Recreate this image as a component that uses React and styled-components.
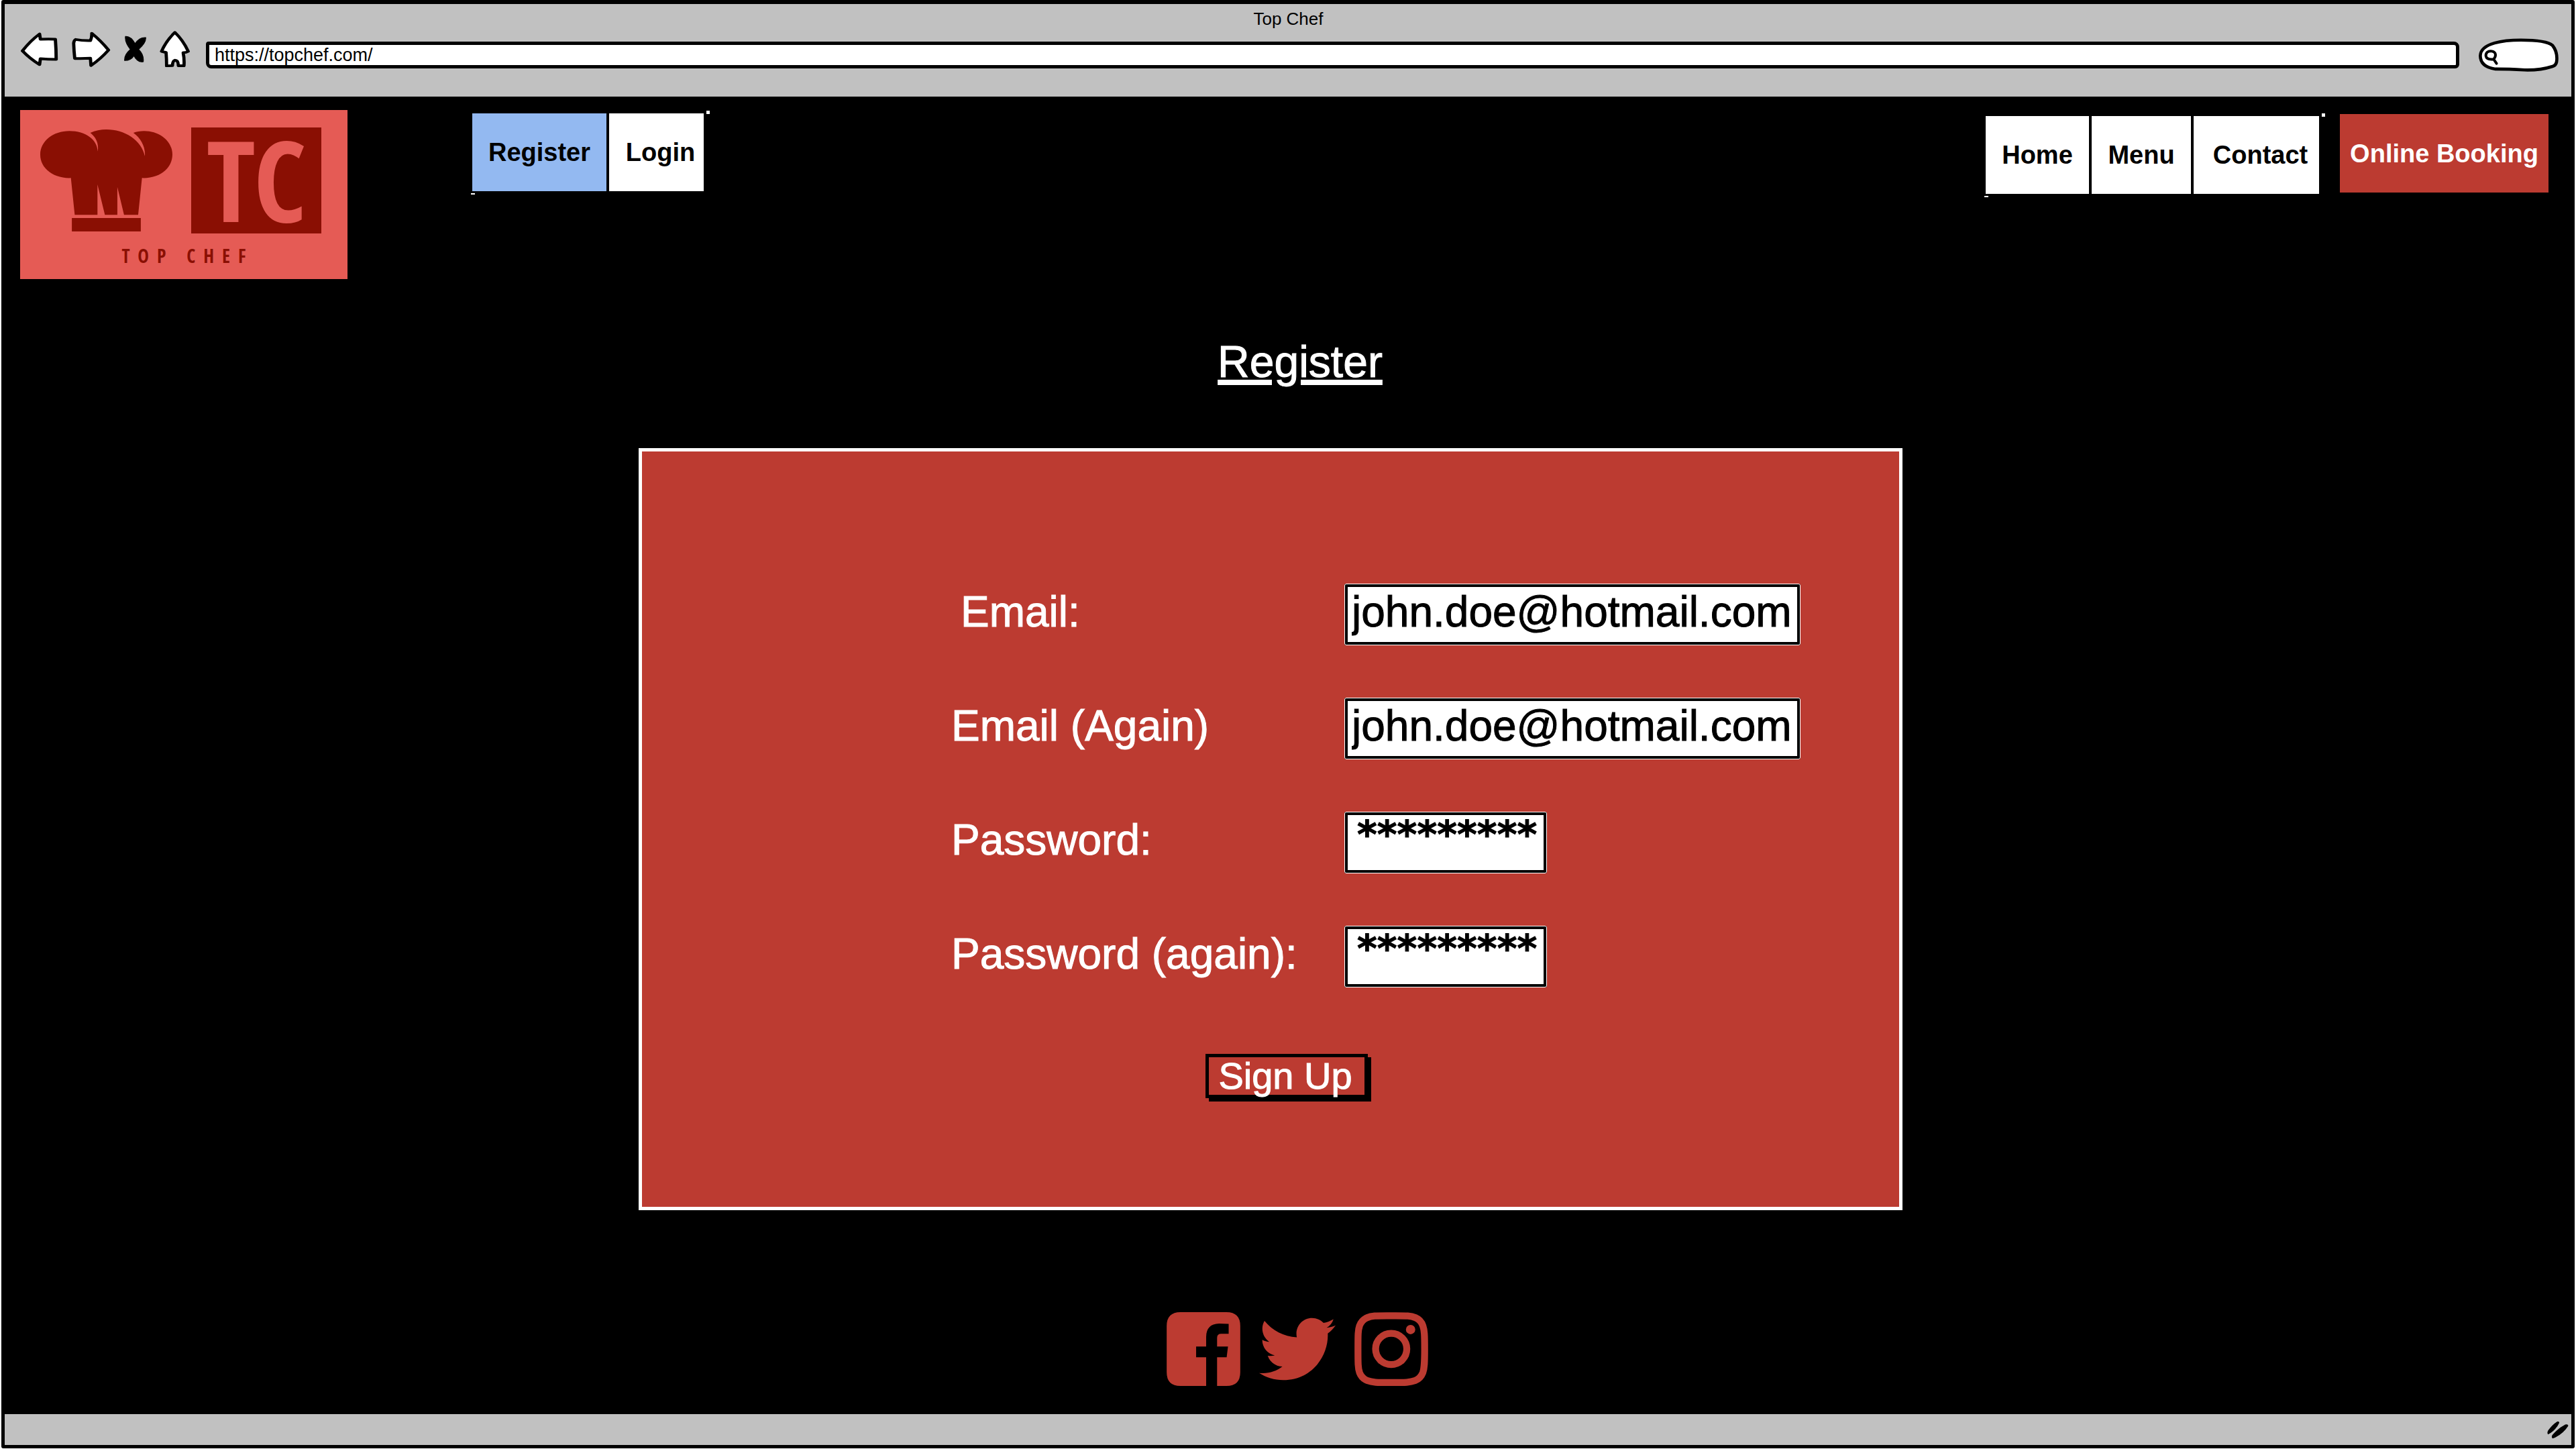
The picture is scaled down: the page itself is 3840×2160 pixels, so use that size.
import React from "react";
import styled, { createGlobalStyle } from "styled-components";
import { FaTwitter } from "react-icons/fa";

const RED = "#bc3b31";
const CHROME = "#c1c1c1";

const GlobalStyle = createGlobalStyle`
  * { box-sizing: border-box; }
  body { margin: 0; background: #fff; }
  body, input, button { font-family: "Liberation Sans", Arial, sans-serif; }
`;

const BrowserFrame = styled.div`
  margin: 0 2px 2px;
  border: 5px solid #000;
  border-top-width: 6px;
  border-radius: 3px;
  min-height: calc(100vh - 2px);
  background: #000;
  display: flex;
  flex-direction: column;
`;

const Toolbar = styled.div`
  height: 138px;
  background: ${CHROME};
  padding: 8px 23px 0 24px;
`;

const WindowTitle = styled.div`
  text-align: center;
  font-size: 26px;
  line-height: 28px;
  padding-bottom: 4px;
`;

const ToolbarRow = styled.div`
  display: flex;
  align-items: flex-end;
  height: 61px;
  margin-right: -4px;
`;

const ToolbarButtons = styled.div`
  display: flex;
  align-items: center;
  align-self: flex-start;
  height: 54px;
  gap: 20px;
  margin-right: 24px;
`;

const IconButton = styled.button`
  border: 0;
  padding: 0;
  background: none;
  display: flex;
`;

const AddressInput = styled.input`
  flex: 1;
  min-width: 0;
  height: 40px;
  margin: 0 29px 5px 0;
  padding: 0 8px;
  border: 5px solid #000;
  border-radius: 4px 8px 6px 8px;
  background: #fff;
  color: #000;
  font-size: 27px;
`;

const SearchBox = styled.div`
  position: relative;
  width: 119px;
  height: 50px;
`;

const SearchInput = styled.input`
  position: absolute;
  top: 10px;
  left: 32px;
  width: 72px;
  height: 30px;
  border: 0;
  padding: 0;
  background: none;
  font-size: 27px;
`;

const Header = styled.header`
  display: flex;
  align-items: flex-start;
  padding: 20px 34px 0 23px;
`;

const Logo = styled.a`
  width: 488px;
  height: 252px;
  margin-right: 186px;
  background: #e55b55;
  color: #8a0f03;
  text-decoration: none;
  font-family: "Open Sans Condensed", "Liberation Sans Narrow", "Open Sans", sans-serif;
  font-weight: 300;
`;

const LogoMarks = styled.div`
  display: flex;
  align-items: flex-start;
  gap: 28px;
  padding: 26px 0 0 30px;
  svg { margin-top: 3px; }
`;

const Monogram = styled.div`
  width: 194px;
  height: 158px;
  background: #8a0f03;
  color: #e55b55;
  display: flex;
  align-items: center;
  justify-content: center;
  font-size: 168px;
  line-height: 152px;
  padding-bottom: 6px;
`;

const LogoName = styled.div`
  text-align: center;
  font-size: 28px;
  line-height: 36px;
  letter-spacing: 12px;
  padding: 15px 0 0 12px;
`;

const NavGroup = styled.nav`
  position: relative;
  display: flex;
  gap: 4px;
  margin-top: ${(p) => (p.$end ? 9 : 5)}px;
  margin-left: ${(p) => (p.$end ? "auto" : "0")};

  &::before, &::after {
    content: "";
    position: absolute;
    background: #fff;
  }
  &::before { left: -2px; bottom: -5px; width: 6px; height: 2px; }
  &::after { right: -9px; top: -4px; width: 5px; height: 5px; }
`;

const NavLink = styled.a`
  display: flex;
  align-items: center;
  justify-content: center;
  width: ${(p) => p.$width}px;
  height: 116px;
  background: ${(p) => (p.$active ? "#93b9f1" : "#fff")};
  color: #000;
  font-size: 38px;
  font-weight: 700;
  text-decoration: none;
  &:last-child { padding-left: 12px; }
`;

const BookingButton = styled.button`
  width: 311px;
  height: 117px;
  margin: 6px 0 0 31px;
  padding: 2px 0 0;
  border: 0;
  background: ${RED};
  color: #fff;
  font-size: 38px;
  font-weight: 700;
`;

const Main = styled.main`
  flex: 1;
  display: flex;
  flex-direction: column;
  align-items: center;
`;

const PageTitle = styled.h1`
  margin: 85px 0 91px;
  padding-left: 36px;
  color: #fff;
  font-size: 66px;
  line-height: 76px;
  font-weight: 400;
  -webkit-text-stroke: 1px currentColor;
  text-decoration: underline;
  text-decoration-thickness: 8px;
  text-underline-offset: 4px;
`;

const Panel = styled.form`
  width: 1884px;
  max-width: 96%;
  margin-right: 52px;
  padding: 197px 0 162px;
  border: 5px solid #fff;
  background: ${RED};
  display: flex;
  flex-direction: column;
  align-items: center;
  gap: 99px;
`;

const Fields = styled.div`
  display: grid;
  row-gap: 78px;
  padding-left: 312px;
`;

const FieldRow = styled.div`
  display: grid;
  grid-template-columns: 588px 680px;
  align-items: center;
`;

const Label = styled.label`
  padding: 0 0 8px ${(p) => (p.$indent ? 16 : 2)}px;
  color: #fff;
  font-size: 64px;
  line-height: 72px;
  -webkit-text-stroke: 1px currentColor;
`;

const TextInput = styled.input`
  width: ${(p) => (p.$short ? 302 : 680)}px;
  height: 92px;
  border: 5px solid #000;
  border-radius: 3px;
  outline: 1px solid #fff;
  outline-offset: -1px;
  background: #fff;
  color: #000;
  -webkit-text-stroke: 1px currentColor;
  ${(p) =>
    p.$short
      ? `font: 700 57px/58px "DejaVu Sans", sans-serif; padding: 0 6px 24px 14px;`
      : `font-size: 64px; padding: 0 6px 8px;`}
`;

const SubmitButton = styled.button`
  width: 242px;
  height: 66px;
  margin-left: 48px;
  padding: 0 4px 0 0;
  border: 5px solid #000;
  background: ${RED};
  box-shadow: 5px 5px 0 #000;
  color: #fff;
  font-size: 56px;
  line-height: 56px;
  -webkit-text-stroke: 1px currentColor;
`;

const SocialLinks = styled.nav`
  display: flex;
  align-items: center;
  gap: 28px;
  padding: 150px 0 40px 28px;
`;

const SocialLink = styled.a`
  display: flex;
  color: ${RED};
`;

const StatusBar = styled.footer`
  height: 46px;
  padding: 0 4px;
  background: ${CHROME};
  display: flex;
  align-items: center;
  justify-content: flex-end;
`;

const sketch = {
  fill: "#fff",
  stroke: "#000",
  strokeWidth: 12,
  strokeLinejoin: "round",
  strokeLinecap: "round",
};

function BackIcon() {
  return (
    <svg width="56" height="51" viewBox="76 142 138 154" preserveAspectRatio="none">
      <path {...sketch} d="M82 226Q112 180 145 150L148 174Q180 172 203 174Q206 220 206 264Q174 264 148 261L145 288Q110 262 82 226Z" />
    </svg>
  );
}

function ForwardIcon() {
  return (
    <svg width="58" height="53" viewBox="257 142 144 161" preserveAspectRatio="none">
      <path {...sketch} d="M271 178Q298 184 326 183Q332 166 331 150Q365 184 393 226Q364 266 328 296L326 263Q298 265 268 264Q265 230 264 195Q265 182 271 178Z" />
    </svg>
  );
}

function StopIcon() {
  return (
    <svg width="33" height="40" viewBox="459 152 81 120" preserveAspectRatio="none">
      <path d="M464 156Q484 154 499 188Q516 158 538 161Q540 184 512 214Q532 238 529 269Q508 274 495 242Q484 264 461 264Q459 238 482 214Q461 182 464 156Z" stroke="#000" strokeWidth="3" />
    </svg>
  );
}

function HomeIcon() {
  return (
    <svg width="45" height="54" viewBox="580 137 113 164" preserveAspectRatio="none">
      <path {...sketch} d="M637 144Q668 180 687 230Q680 236 668 236Q673 265 671 295L650 295Q650 270 637 270Q628 274 628 294L606 296Q606 262 604 235L587 230Q604 182 637 144Z" />
    </svg>
  );
}

function SearchOutline() {
  return (
    <svg width="119" height="50" viewBox="285 170 358 150" aria-hidden="true">
      <path {...sketch} strokeWidth="14" d="M360 308Q292 298 292 248C294 190 400 178 474 178C540 178 596 184 616 202Q638 230 635 268Q634 292 616 296Q560 314 490 312Q420 308 360 308Z" />
      <path d="M344 228C326 225 316 236 317 249C319 264 332 266 352 264C364 250 364 232 344 228ZM352 264L365 283" fill="none" stroke="#000" strokeWidth="12" strokeLinecap="round" />
    </svg>
  );
}

function ChefHat() {
  return (
    <svg width="197" height="152" viewBox="168 158 552 456" preserveAspectRatio="none" aria-hidden="true">
      <g fill="#8a0f03">
        <path d="M296 375C222 378 168 330 168 271C168 210 222 165 290 165C358 165 406 204 408 256C414 218 398 190 377 173C398 163 420 158 444 158C520 158 590 204 605 277C608 236 588 196 557 173C570 168 586 165 602 165C668 165 720 212 720 270C720 330 668 378 593 375L577 540H518L490 415V540H438L407 404V540H312Z" />
        <path d="M300 554H588V614H300Z" />
      </g>
    </svg>
  );
}

function FacebookIcon() {
  return (
    <svg width="110" height="110" viewBox="117 107 330 331" aria-hidden="true">
      <path fill={RED} d="M179 107H385Q447 107 447 169V376Q447 438 385 438H343V309H386L392 261H343V222Q343 204 362 204H395V160Q370 158 352 158Q294 160 294 218V261H249V309H294V438H179Q117 438 117 376V169Q117 107 179 107Z" />
    </svg>
  );
}

function InstagramIcon() {
  return (
    <svg width="110" height="110" viewBox="957 107 331 331" fill="none" stroke={RED} strokeWidth="31" aria-hidden="true">
      <path d="M1122 123C1186 123 1208 122 1231 132Q1255 142 1264 168C1271 188 1272 208 1272 272C1272 336 1271 358 1264 378Q1254 404 1229 414C1208 422 1186 423 1122 423C1058 423 1036 422 1015 414Q990 404 980 378C973 358 973 336 973 272C973 208 973 188 980 168Q990 142 1014 132C1036 122 1058 123 1122 123Z" />
      <circle cx="1122" cy="272" r="70" />
      <circle cx="1209" cy="185" r="21" fill={RED} stroke="none" />
    </svg>
  );
}

function ResizeGrip() {
  return (
    <svg width="32" height="27" viewBox="470 125 97 79" aria-hidden="true">
      <path d="M515 127Q527 126 524 134Q506 170 474 185Q468 178 475 166Q494 140 515 127ZM552 140Q566 138 565 147Q538 188 495 203Q488 200 493 188Q520 156 552 140Z" />
    </svg>
  );
}

function Field({ id, label, indent, short, value }) {
  return (
    <FieldRow>
      <Label htmlFor={id} $indent={indent}>{label}</Label>
      <TextInput id={id} type="text" $short={short} defaultValue={value} />
    </FieldRow>
  );
}

export default function App() {
  return (
    <>
      <GlobalStyle />
      <BrowserFrame>
        <Toolbar>
          <WindowTitle>Top Chef</WindowTitle>
          <ToolbarRow>
            <ToolbarButtons>
              <IconButton aria-label="Back"><BackIcon /></IconButton>
              <IconButton aria-label="Forward"><ForwardIcon /></IconButton>
              <IconButton aria-label="Stop"><StopIcon /></IconButton>
              <IconButton aria-label="Home page"><HomeIcon /></IconButton>
            </ToolbarButtons>
            <AddressInput type="text" aria-label="Address" defaultValue="https://topchef.com/" />
            <SearchBox>
              <SearchOutline />
              <SearchInput type="text" aria-label="Search" />
            </SearchBox>
          </ToolbarRow>
        </Toolbar>

        <Header>
          <Logo href="#home">
            <LogoMarks>
              <ChefHat />
              <Monogram>TC</Monogram>
            </LogoMarks>
            <LogoName>TOP CHEF</LogoName>
          </Logo>
          <NavGroup aria-label="Account">
            <NavLink href="#register" $width={200} $active>Register</NavLink>
            <NavLink href="#login" $width={141}>Login</NavLink>
          </NavGroup>
          <NavGroup aria-label="Site" $end>
            <NavLink href="#home" $width={154}>Home</NavLink>
            <NavLink href="#menu" $width={148}>Menu</NavLink>
            <NavLink href="#contact" $width={187}>Contact</NavLink>
          </NavGroup>
          <BookingButton type="button">Online Booking</BookingButton>
        </Header>

        <Main>
          <PageTitle>Register</PageTitle>
          <Panel onSubmit={(e) => e.preventDefault()}>
            <Fields>
              <Field id="email" label="Email:" indent value="john.doe@hotmail.com" />
              <Field id="email-again" label="Email (Again)" value="john.doe@hotmail.com" />
              <Field id="password" label="Password:" short value="*********" />
              <Field id="password-again" label="Password (again):" short value="*********" />
            </Fields>
            <SubmitButton type="submit">Sign Up</SubmitButton>
          </Panel>
          <SocialLinks aria-label="Social media">
            <SocialLink href="#facebook" aria-label="Facebook"><FacebookIcon /></SocialLink>
            <SocialLink href="#twitter" aria-label="Twitter"><FaTwitter size={114} /></SocialLink>
            <SocialLink href="#instagram" aria-label="Instagram"><InstagramIcon /></SocialLink>
          </SocialLinks>
        </Main>

        <StatusBar><ResizeGrip /></StatusBar>
      </BrowserFrame>
    </>
  );
}
